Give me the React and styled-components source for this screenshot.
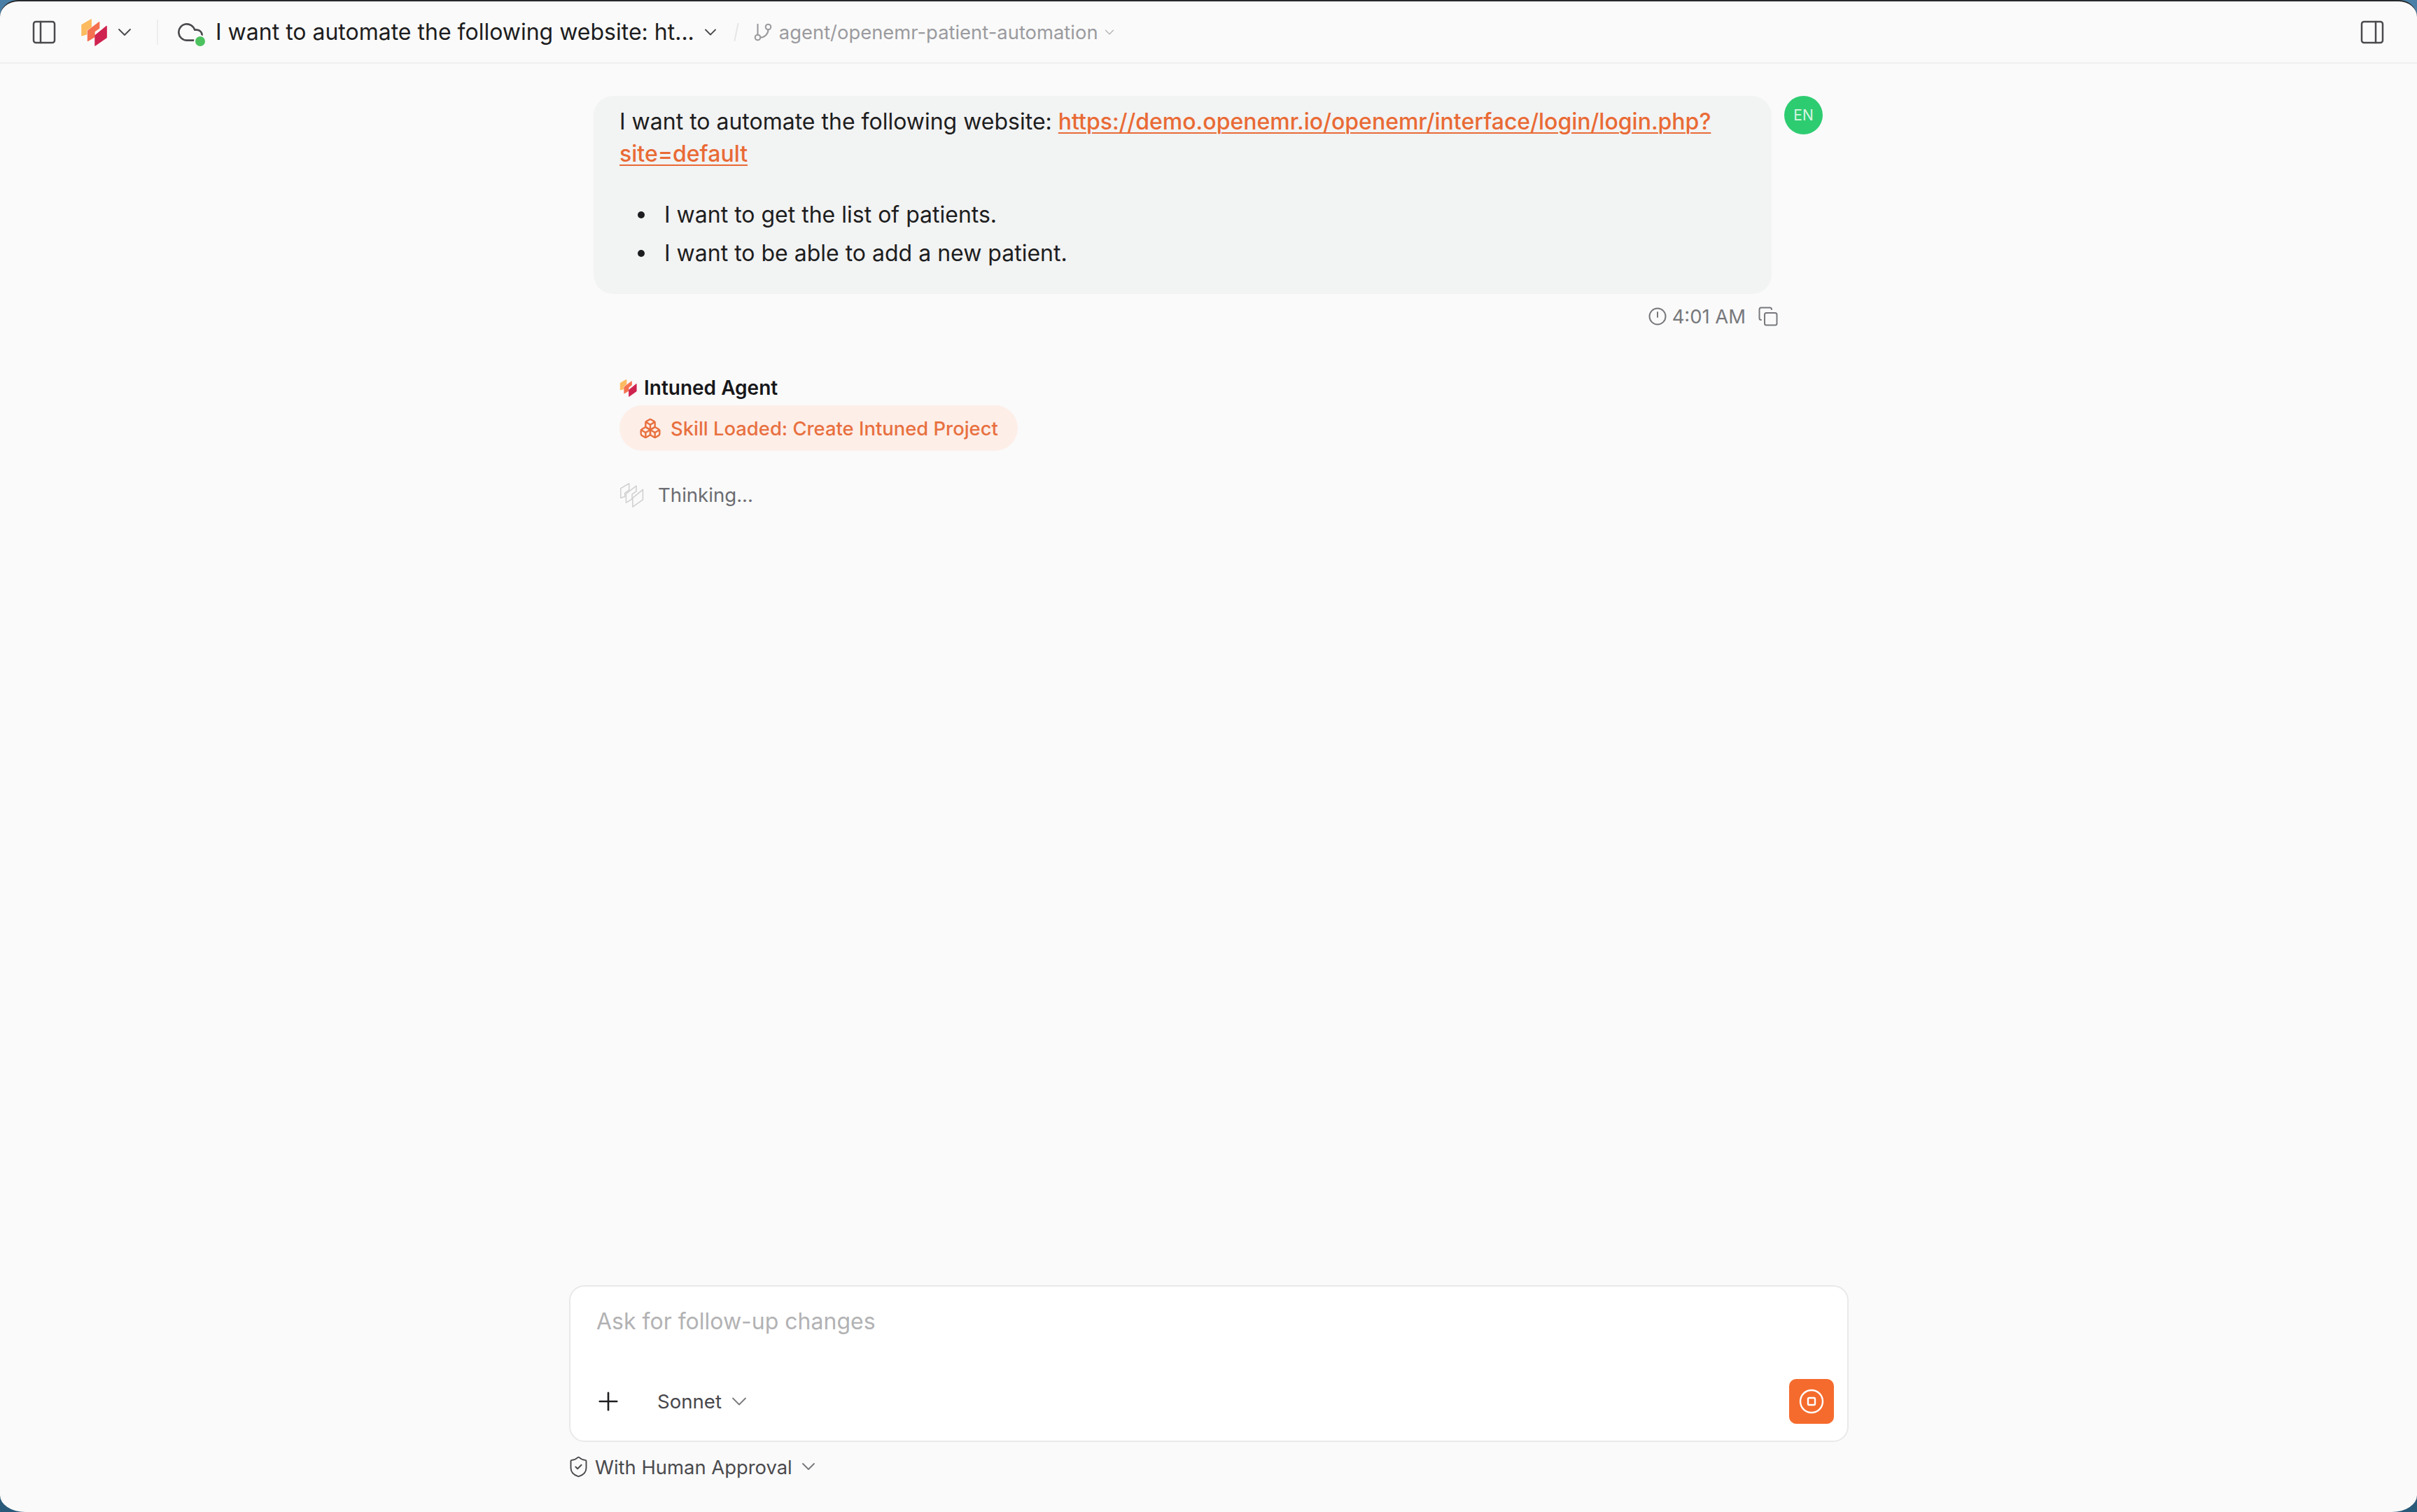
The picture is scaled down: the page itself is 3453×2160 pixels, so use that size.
import React from "react";
import styled, { createGlobalStyle } from "styled-components";
import { PanelLeft, PanelRight, ChevronDown, Cloud, GitBranch, Copy, Boxes, Plus, ShieldCheck } from "lucide-react";

const Global = createGlobalStyle`
  html, body { margin: 0; padding: 0; height: 100%; background: #3f6f93; }
  #root { height: 100%; }
  * { box-sizing: border-box; }
  body { font-family: Inter, "Liberation Sans", sans-serif; overflow: hidden; }
`;

const Desktop = styled.div`
  width: 3453px;
  height: 2160px;
  background: linear-gradient(180deg, #4a80a8 0%, #2a5a7a 100%);
`;
const Window = styled.div`
  height: 100%;
  display: flex;
  flex-direction: column;
  background: #fafafa;
  border-top: 2px solid #26282b;
  border-radius: 26px 26px 36px 36px / 24px 24px 24px 24px;
  overflow: hidden;
`;
const Header = styled.header`
  height: 89px;
  flex: none;
  display: flex;
  align-items: center;
  padding: 0 44px 0 43px;
  border-bottom: 2px solid #efefef;
  color: #4a4a4e;
`;
const Row = styled.div`
  display: flex;
  align-items: center;
  gap: ${(p) => p.$gap || 0}px;
  margin-left: ${(p) => p.$ml || 0}px;
`;
const Divider = styled.div`
  width: 2px;
  height: 36px;
  background: #ededed;
  margin-left: 30px;
`;
const Slash = styled.div`
  width: 2px;
  height: 26px;
  background: #e6e6e6;
  transform: rotate(12deg);
  margin-left: 22px;
`;
const CloudWrap = styled.div`
  position: relative;
  width: 40px;
  height: 40px;
  margin-left: 26px;
  color: #4a4a4e;
`;
const Dot = styled.span`
  position: absolute;
  width: 14px;
  height: 14px;
  right: -1px;
  bottom: 0;
  border-radius: 50%;
  background: #4cc25f;
  box-shadow: 0 0 0 2px #fafafa;
`;
const Title = styled.div`
  font-size: 32px;
  line-height: 46px;
  color: #1d1d20;
  margin-left: 16px;
  white-space: nowrap;
`;
const Branch = styled.div`
  font-size: 27.4px;
  color: #9b9b9f;
  margin-left: 8px;
  white-space: nowrap;
`;
const Spacer = styled.div`
  flex: 1;
`;
const Main = styled.main`
  flex: 1;
  width: 1828px;
  margin-left: 813px;
  display: flex;
  flex-direction: column;
`;
const Thread = styled.section`
  flex: 1;
  padding: 46px 0 0 35px;
`;
const UserRow = styled.div`
  display: flex;
  align-items: flex-start;
  gap: 18px;
`;
const Bubble = styled.div`
  width: 1683px;
  height: 283px;
  padding: 14px 37px;
  background: #f2f3f3;
  border-radius: 28px;
  font-size: 32px;
  line-height: 46px;
  color: #1d1d20;
`;
const Link = styled.a`
  color: #e96a35;
  font-weight: 500;
  text-decoration: underline;
  text-underline-offset: 4px;
  text-decoration-thickness: 2px;
`;
const List = styled.ul`
  margin: 41px 0 0;
  padding: 0 0 0 26px;
  list-style: none;
`;
const Item = styled.li`
  display: flex;
  align-items: center;
  margin-bottom: 9px;
  &::before {
    content: "";
    width: 10px;
    height: 10px;
    margin-right: 28px;
    border-radius: 50%;
    background: #1d1d20;
  }
`;
const Avatar = styled.div`
  width: 55px;
  height: 55px;
  flex: none;
  border-radius: 50%;
  background: #2ecc71;
  color: #d9f5e3;
  font-size: 21px;
  display: flex;
  align-items: center;
  justify-content: center;
`;
const Meta = styled.div`
  width: 1693px;
  height: 32px;
  margin-top: 16px;
  display: flex;
  align-items: center;
  justify-content: flex-end;
  color: #77787c;
  font-size: 27.4px;
  line-height: 32px;
`;
const AgentBlock = styled.div`
  margin: 68px 0 0 37px;
`;
const AgentName = styled.div`
  display: flex;
  align-items: center;
  gap: 9px;
  font-size: 28px;
  line-height: 36px;
  font-weight: 600;
  color: #17171a;
`;
const Pill = styled.div`
  display: inline-flex;
  align-items: center;
  gap: 13px;
  height: 65px;
  margin-top: 7px;
  padding: 0 28px;
  border-radius: 33px;
  background: #fdeee8;
  color: #e8703f;
  font-size: 27.4px;
  font-weight: 500;
`;
const Thinking = styled.div`
  display: flex;
  align-items: center;
  gap: 19px;
  margin-top: 45px;
  font-size: 27.6px;
  color: #6b6c72;
`;
const Composer = styled.div`
  height: 224px;
  flex: none;
  display: flex;
  flex-direction: column;
  background: #fff;
  border: 2px solid #e9e9e9;
  border-radius: 22px;
  padding: 0 19px 0 37px;
`;
const Placeholder = styled.div`
  flex: 1;
  padding-top: 29px;
  font-size: 32px;
  line-height: 42px;
  color: #b2b2b4;
`;
const Controls = styled.div`
  height: 84px;
  margin-bottom: 14px;
  display: flex;
  align-items: center;
`;
const PlusBtn = styled.div`
  margin-left: -4px;
  display: flex;
  color: #1d1d20;
`;
const Model = styled.div`
  display: flex;
  align-items: center;
  gap: 7px;
  margin-left: 49px;
  font-size: 27.6px;
  color: #47474b;
`;
const StopBtn = styled.button`
  width: 64px;
  height: 64px;
  margin-left: auto;
  border: none;
  padding: 0;
  border-radius: 10px;
  background: #f56b2d;
  display: flex;
  align-items: center;
  justify-content: center;
`;
const Approval = styled.div`
  height: 100px;
  flex: none;
  padding-top: 19px;
  margin-left: -3px;
  display: flex;
  align-items: flex-start;
  gap: 7px;
  font-size: 27.4px;
  line-height: 34px;
  color: #4a4a4e;
`;

const Logo = ({ size = 40, outline }) => {
  const paint = (c) =>
    outline
      ? { fill: "none", stroke: "#d0d0d2", strokeWidth: 1.8 }
      : { fill: c, stroke: c, strokeWidth: 1.4 };
  return (
    <svg width={size} height={size} viewBox="0 0 40 42" strokeLinejoin="round">
      <path d="M1 10 15 2V13L8 18V24L1 26Z" {...paint("#fdbb5f")} />
      <path d="M10 19 27 6V15L20 20V28L10 34Z" {...paint("#f4714f")} />
      <path d="M21 26 38 12V29L21 41Z" {...paint("#cf2350")} />
    </svg>
  );
};

const ClockIcon = () => (
  <svg width="26" height="26" viewBox="0 0 26 26" fill="none" stroke="currentColor" strokeWidth="2" strokeLinecap="round" style={{ marginRight: 8 }}>
    <circle cx="13" cy="13" r="11.5" />
    <path d="M13 7v7" />
  </svg>
);

const StopIcon = () => (
  <svg width="36" height="36" viewBox="0 0 36 36" fill="none" stroke="#fff" strokeWidth="2.4">
    <circle cx="18" cy="18" r="16" />
    <rect x="13" y="13" width="10" height="10" rx="1.5" />
  </svg>
);

export default function App() {
  return (
    <Desktop>
      <Global />
      <Window>
        <Header>
          <PanelLeft size={40} strokeWidth={1.5} />
          <Row $ml={32} $gap={7}>
            <Logo size={40} />
            <ChevronDown size={32} strokeWidth={1.4} />
          </Row>
          <Divider />
          <CloudWrap>
            <Cloud size={40} strokeWidth={1.6} />
            <Dot />
          </CloudWrap>
          <Title>I want to automate the following website: ht...</Title>
          <Row $ml={9}><ChevronDown size={28} strokeWidth={1.6} /></Row>
          <Slash />
          <Row $ml={22}><GitBranch size={30} strokeWidth={1.7} color="#9b9b9f" /></Row>
          <Branch>agent/openemr-patient-automation</Branch>
          <Row $ml={5}><ChevronDown size={22} strokeWidth={1.5} color="#b5b5b8" /></Row>
          <Spacer />
          <PanelRight size={40} strokeWidth={1.5} />
        </Header>
        <Main>
          <Thread>
            <UserRow>
              <Bubble>
                I want to automate the following website:{" "}
                <Link>https://demo.openemr.io/openemr/interface/login/login.php?site=default</Link>
                <List>
                  <Item>I want to get the list of patients.</Item>
                  <Item>I want to be able to add a new patient.</Item>
                </List>
              </Bubble>
              <Avatar>EN</Avatar>
            </UserRow>
            <Meta>
              <ClockIcon />
              4:01 AM
              <Copy size={30} strokeWidth={1.6} style={{ marginLeft: 17 }} />
            </Meta>
            <AgentBlock>
              <AgentName><Logo size={26} />Intuned Agent</AgentName>
              <Pill><Boxes size={32} strokeWidth={1.8} />Skill Loaded: Create Intuned Project</Pill>
              <Thinking><Logo size={36} outline />Thinking...</Thinking>
            </AgentBlock>
          </Thread>
          <Composer>
            <Placeholder>Ask for follow-up changes</Placeholder>
            <Controls>
              <PlusBtn><Plus size={42} strokeWidth={1.5} /></PlusBtn>
              <Model>Sonnet<ChevronDown size={36} strokeWidth={1.2} color="#77787c" /></Model>
              <StopBtn><StopIcon /></StopBtn>
            </Controls>
          </Composer>
          <Approval>
            <ShieldCheck size={33} strokeWidth={1.4} />
            With Human Approval
            <ChevronDown size={32} strokeWidth={1.4} color="#77787c" />
          </Approval>
        </Main>
      </Window>
    </Desktop>
  );
}
